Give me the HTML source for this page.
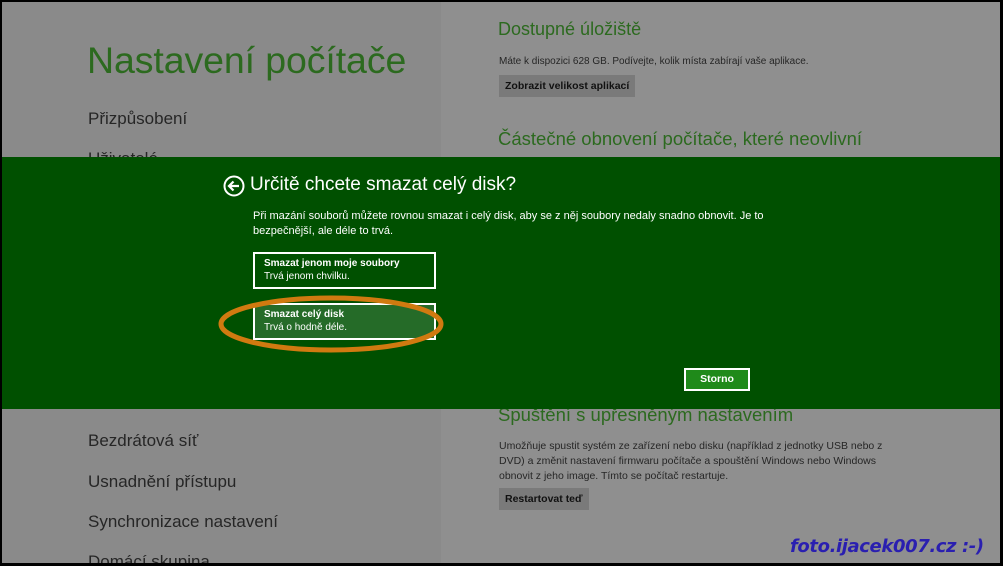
<!DOCTYPE html>
<html><head><meta charset="utf-8"><style>
*{margin:0;padding:0;box-sizing:border-box}
body{width:1003px;height:566px;overflow:hidden;background:#000;position:relative;font-family:"Liberation Sans",sans-serif}
.frame{position:absolute;left:2px;top:2px;width:998px;height:561px;background:#8f8f8f;overflow:hidden}
.left{position:absolute;left:0;top:0;width:439px;height:100%;background:#8a8a8a}
.a{position:absolute;white-space:nowrap}
.g{color:#2c6a1f}
.d{color:#262626}
.band{position:absolute;left:0;top:155px;width:998px;height:252px;background:#005000}
.w{color:#fff}
.opt{position:absolute;left:251px;width:183px;height:37px;border:2px solid #fff;color:#fff;padding:3px 0 0 9px;font-size:10px;line-height:13px}
.btn{position:absolute;background:#7a7a7a;color:#111;font-size:10.5px;font-weight:bold;padding:0 6px;line-height:22px;height:22px}
</style></head><body>
<div class="frame">
 <div class="left"></div>
 <div class="a g" style="left:85px;top:37px;font-size:37.5px;letter-spacing:-0.1px">Nastavení počítače</div>
 <div class="a d" style="left:86px;top:107px;font-size:17px">Přizpůsobení</div>
 <div class="a d" style="left:86px;top:147px;font-size:17px">Uživatelé</div>
 <div class="a d" style="left:86px;top:429px;font-size:17px">Bezdrátová síť</div>
 <div class="a d" style="left:86px;top:470px;font-size:17px">Usnadnění přístupu</div>
 <div class="a d" style="left:86px;top:510px;font-size:17px">Synchronizace nastavení</div>
 <div class="a d" style="left:86px;top:550px;font-size:17px">Domácí skupina</div>

 <div class="a g" style="left:496px;top:17px;font-size:18px">Dostupné úložiště</div>
 <div class="a d" style="left:497px;top:54px;font-size:10px">Máte k dispozici 628 GB. Podívejte, kolik místa zabírají vaše aplikace.</div>
 <div class="btn" style="left:497px;top:73px">Zobrazit velikost aplikací</div>
 <div class="a g" style="left:496px;top:126px;font-size:18.5px">Částečné obnovení počítače, které neovlivní</div>

 <div class="a g" style="left:496px;top:402px;font-size:18.5px">Spuštění s upřesněným nastavením</div>
 <div class="a d" style="left:497px;top:437px;font-size:10.5px;line-height:15px;white-space:normal;width:388px">Umožňuje spustit systém ze zařízení nebo disku (například z jednotky USB nebo z DVD) a změnit nastavení firmwaru počítače a spouštění Windows nebo Windows obnovit z jeho image. Tímto se počítač restartuje.</div>
 <div class="btn" style="left:497px;top:486px">Restartovat teď</div>

 <div class="a" style="left:788px;top:534px;font-size:18px;font-weight:bold;font-style:italic;color:#2a1fb0;font-family:'DejaVu Sans',sans-serif;letter-spacing:-0.4px">foto.ijacek007.cz :-)</div>

 <div class="band">
  <svg class="a" style="left:221px;top:18px" width="22" height="22" viewBox="0 0 22 22"><circle cx="11" cy="11" r="9.5" fill="none" stroke="#fff" stroke-width="2"/><path d="M16 11H6.5M10.5 6.5L6 11l4.5 4.5" fill="none" stroke="#fff" stroke-width="2.2"/></svg>
  <div class="a w" style="left:248px;top:17px;font-size:19px">Určitě chcete smazat celý disk?</div>
  <div class="a w" style="left:251px;top:52px;font-size:11px;line-height:15px;white-space:normal;width:512px">Při mazání souborů můžete rovnou smazat i celý disk, aby se z něj soubory nedaly snadno obnovit. Je to bezpečnější, ale déle to trvá.</div>
  <div class="opt" style="top:95px"><b>Smazat jenom moje soubory</b><br>Trvá jenom chvilku.</div>
  <div class="opt" style="top:146px;background:#256b28"><b>Smazat celý disk</b><br>Trvá o hodně déle.</div>
  <svg class="a" style="left:214px;top:137px" width="230" height="64"><ellipse cx="115" cy="30" rx="110" ry="26" fill="none" stroke="#d07a10" stroke-width="5"/></svg>
  <div class="a w" style="left:682px;top:211px;width:66px;height:23px;border:2px solid #fff;background:#1f8a1a;font-size:10.5px;font-weight:bold;text-align:center;line-height:19px">Storno</div>
 </div>
</div>
</body></html>
